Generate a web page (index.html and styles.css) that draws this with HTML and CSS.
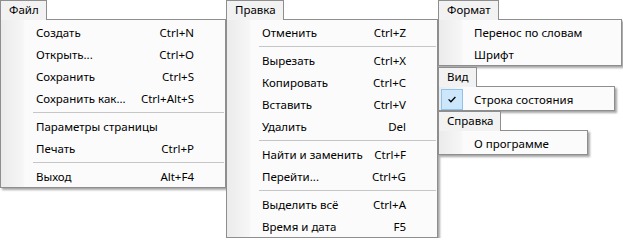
FILE: index.html
```html
<!DOCTYPE html>
<html lang="ru">
<head>
  <meta charset="UTF-8" />
  <title>Меню</title>
  <link rel="stylesheet" href="styles.css">
</head>
<body>
  <div class="menus">
    <div class="menu menu-file">
      <div class="tab">Файл</div>
      <div class="panel">
        <div class="item"><span>Создать</span><span>Ctrl+N</span></div>
        <div class="item"><span>Открыть...</span><span>Ctrl+O</span></div>
        <div class="item"><span>Сохранить</span><span>Ctrl+S</span></div>
        <div class="item"><span>Сохранить как...</span><span>Ctrl+Alt+S</span></div>
        <div class="sep"></div>
        <div class="item"><span>Параметры страницы</span></div>
        <div class="item"><span>Печать</span><span>Ctrl+P</span></div>
        <div class="sep"></div>
        <div class="item"><span>Выход</span><span>Alt+F4</span></div>
      </div>
    </div>

    <div class="menu menu-edit">
      <div class="tab">Правка</div>
      <div class="panel">
        <div class="item"><span>Отменить</span><span>Ctrl+Z</span></div>
        <div class="sep"></div>
        <div class="item"><span>Вырезать</span><span>Ctrl+X</span></div>
        <div class="item"><span>Копировать</span><span>Ctrl+C</span></div>
        <div class="item"><span>Вставить</span><span>Ctrl+V</span></div>
        <div class="item"><span>Удалить</span><span>Del</span></div>
        <div class="sep"></div>
        <div class="item"><span>Найти и заменить</span><span>Ctrl+F</span></div>
        <div class="item"><span>Перейти...</span><span>Ctrl+G</span></div>
        <div class="sep"></div>
        <div class="item"><span>Выделить всё</span><span>Ctrl+A</span></div>
        <div class="item"><span>Время и дата</span><span>F5</span></div>
      </div>
    </div>

    <div class="stack">
      <div class="menu menu-format">
        <div class="tab">Формат</div>
        <div class="panel">
          <div class="item"><span>Перенос по словам</span></div>
          <div class="item"><span>Шрифт</span></div>
        </div>
      </div>

      <div class="menu menu-view">
        <div class="tab">Вид</div>
        <div class="panel">
          <div class="item checked">
            <span class="check">
              <svg width="8" height="7" viewBox="0 0 8 7"><polyline points="0.6,3.4 2.9,5.8 7.4,1" fill="none" stroke="#000" stroke-width="1.3"/></svg>
            </span>
            <span>Строка состояния</span>
          </div>
        </div>
      </div>

      <div class="menu menu-help">
        <div class="tab">Справка</div>
        <div class="panel">
          <div class="item"><span>О программе</span></div>
        </div>
      </div>
    </div>
  </div>
</body>
</html>
```

FILE: styles.css
```css
body {
  margin: 0;
  background: #ffffff;
  font-family: 'Noto Sans', 'Liberation Sans', sans-serif;
  font-size: 11.5px;
  color: #000000;
}

.menus {
  display: flex;
  align-items: flex-start;
}

.menu {
  display: flex;
  flex-direction: column;
  align-items: flex-start;
}

.tab {
  position: relative;
  z-index: 1;
  box-sizing: border-box;
  height: 20px;
  margin-bottom: -1px;
  padding: 0 7px 1px 8px;
  line-height: 18px;
  background: #f2f2f2;
  border: 1px solid #8e8e8e;
  border-bottom: none;
}

.panel {
  box-sizing: border-box;
  padding-top: 1px;
  border: 1px solid #8e8e8e;
  background: linear-gradient(to right, #ebebeb 0, #f6f6f6 22px, #fbfbfb 24px, #fbfbfb 100%);
  box-shadow: 2px 2px 2px rgba(0, 0, 0, 0.35);
}

.item {
  position: relative;
  display: flex;
  justify-content: space-between;
  align-items: center;
  height: 22px;
  padding: 0 31px 0 35px;
}

.sep {
  height: 1px;
  margin: 3px 1px 2px 32px;
  background: #c6c6c6;
}

.menu-file .panel {
  width: 226px;
}

.menu-edit .panel {
  width: 212px;
}

.menu-format .panel {
  width: 184px;
}

.menu-view {
  margin-top: 1px;
}

.menu-view .panel {
  width: 177px;
}

.menu-help .panel {
  width: 150px;
}

.checked {
  justify-content: flex-start;
}

.check {
  position: absolute;
  left: 2px;
  top: 1px;
  box-sizing: border-box;
  width: 22px;
  height: 21px;
  display: flex;
  align-items: center;
  justify-content: center;
  background: #cce6fb;
  border: 1px solid #8fc3ee;
}
```
